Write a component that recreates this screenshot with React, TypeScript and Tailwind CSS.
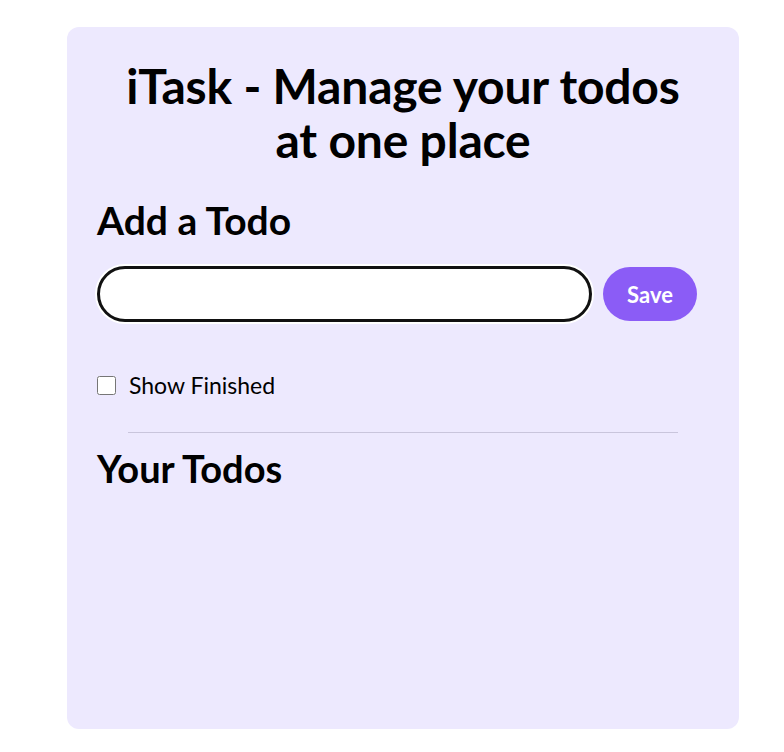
import React, { useState } from "react";

function App() {
  const [todo, setTodo] = useState<string>("");
  const [showFinished, setShowFinished] = useState<boolean>(false);

  return (
    <div className="min-h-screen bg-white font-['Lato',_'Noto_Sans',_sans-serif] text-black">
      <div className="ml-[67px] mt-[27px] w-[672px] h-[702px] rounded-xl bg-[#ede9fe] px-[30px] pt-[32px]">
        <h1 className="text-center font-bold text-[48px] leading-[54px] tracking-[-0.2px]">
          iTask - Manage your todos
          <br />
          at one place
        </h1>

        <div className="mt-[32px] flex flex-col">
          <h2 className="font-bold text-[39px] leading-[42px]">Add a Todo</h2>
          <div className="mt-[25px] flex items-center gap-[11px] pr-[12px]">
            <input
              type="text"
              value={todo}
              onChange={(e) => setTodo(e.target.value)}
              className="h-[56px] flex-1 rounded-full border-[3px] border-[#111] bg-white px-5 text-xl outline-none shadow-[0_0_0_2px_#ffffff]"
            />
            <button
              onClick={() => setTodo("")}
              className="h-[54px] w-[94px] rounded-full bg-[#8b5cf6] text-[22px] font-bold text-white"
            >
              Save
            </button>
          </div>
        </div>

        <label className="mt-[51px] flex items-center gap-[13px] text-[23px] leading-[24px]">
          <input
            type="checkbox"
            checked={showFinished}
            onChange={() => setShowFinished(!showFinished)}
            className="h-[19px] w-[19px]"
          />
          Show Finished
        </label>

        <div className="mx-auto mt-[35px] h-px w-[90%] bg-[#c9c5dc]" />

        <h2 className="mt-[14px] font-bold text-[38px] leading-[42px]">Your Todos</h2>
      </div>
    </div>
  );
}

export default App;
